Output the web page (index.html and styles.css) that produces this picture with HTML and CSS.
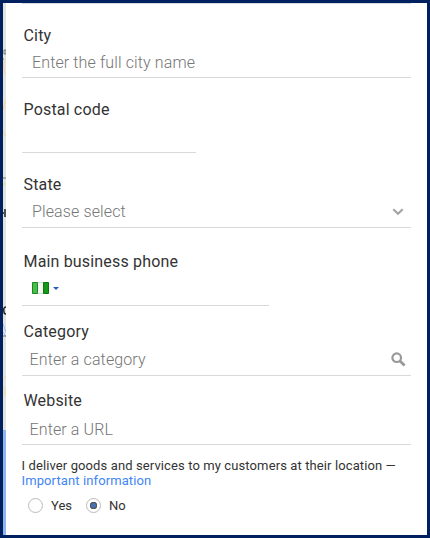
FILE: index.html
```
<!DOCTYPE html>
<html lang="en">
<head>
    <meta charset="UTF-8">
    <title>Business information</title>
    <link rel="stylesheet" href="styles.css">
</head>
<body>
    <div class="window">
        <div class="map">
            <svg width="3" height="532" viewBox="0 0 3 532" fill="none">
                <rect width="3" height="427" fill="#e5e3df"/>
                <rect y="427" width="3" height="105" fill="#8fb5ee"/>
                <path d="M3 56Q-2 61 3 72M0 107L3 96M0 128l3 6M0 181h3M3 373l-3 3M0 384q4 4 1 9" stroke="#f0d58b"/>
                <path d="M0 321l3 8M0 329l3 5" stroke="#9abdf5"/>
                <path d="M1 47h2v4h-2zM0 56h1M0 175h3M0 333h3" stroke="#777"/>
                <path d="M2 206v8M0 210h1M3 304q-3 0-2 5 0 2 2 2" stroke="#222" stroke-width="1.500"/>
            </svg>
        </div>
        <form class="form">
            <div class="field city">
                <label for="city">City</label>
                <div class="control"><input type="text" id="city" placeholder="Enter the full city name"></div>
            </div>
            <div class="field postal">
                <label for="postal">Postal code</label>
                <div class="control"><input type="text" id="postal"></div>
            </div>
            <div class="field state">
                <label>State</label>
                <div class="control">
                    <span class="placeholder">Please select</span>
                    <svg class="chevron" width="12" height="8" viewBox="0 0 12 8" fill="none" stroke="#a5a5a5" stroke-width="2.2">
                        <path d="M1.3 1.3L6 5.8l4.7-4.5"/>
                    </svg>
                </div>
            </div>
            <div class="field phone">
                <label for="phone">Main business phone</label>
                <div class="control">
                    <svg class="flag" width="17" height="12" viewBox="0 0 17 12">
                        <rect x=".5" y=".5" width="16" height="11" fill="#f6f6f6" stroke="#d4d8d4"/>
                        <path d="M.5.5h5v11h-5z" fill="#4dbb4d" stroke="#168a1a"/>
                        <path d="M11.500.5h5v11h-5z" fill="#149a18" stroke="#087b0c"/>
                    </svg>
                    <span class="caret"></span>
                    <input type="text" id="phone">
                </div>
            </div>
            <div class="field category">
                <label for="category">Category</label>
                <div class="control">
                    <input type="text" id="category" placeholder="Enter a category">
                    <svg class="search" width="15" height="15" viewBox="0 0 15 15" fill="none" stroke="#999">
                        <circle cx="5.700" cy="5.700" r="4.300" stroke-width="2.200"/>
                        <path d="M9 9l4.600 4.600" stroke-width="2.800"/>
                    </svg>
                </div>
            </div>
            <div class="field website">
                <label for="website">Website</label>
                <div class="control"><input type="text" id="website" placeholder="Enter a URL"></div>
            </div>
            <p class="delivery">I deliver goods and services to my customers at their location —<br><a href="#">Important information</a></p>
            <div class="options">
                <label><input type="radio" name="deliver">Yes</label>
                <label><input type="radio" name="deliver" checked>No</label>
            </div>
        </form>
    </div>
</body>
</html>
```

FILE: styles.css
```
* {
    box-sizing: border-box;
}

body {
    margin: 0;
    font-family: Roboto, Arial, sans-serif;
    color: #333;
    background: #fff;
}

.window {
    display: flex;
    height: 538px;
    border: 3px solid #002060;
    overflow: hidden;
}

.map {
    width: 3px;
}

.map svg {
    display: block;
}

.form {
    width: 389.5px;
    margin-left: 15.5px;
    border-top: 1px solid #d9d9d9;
}

.field {
    display: flex;
    flex-direction: column;
    justify-content: flex-end;
    border-bottom: 1px solid #d9d9d9;
}

.field > label {
    padding-left: 2px;
    font-size: 16px;
    line-height: 20px;
    letter-spacing: 0.17px;
}

.control {
    display: flex;
    align-items: center;
    height: 32px;
    padding: 0 7px 0 10.5px;
}

.control input {
    flex: 1;
    min-width: 0;
    padding: 0;
    border: 0;
    outline: 0;
    background: none;
    font: 300 16px Roboto, Arial, sans-serif;
    letter-spacing: 0.12px;
}

.control input::placeholder,
.placeholder {
    color: #757575;
    font-size: 16px;
    font-weight: 300;
    letter-spacing: 0.12px;
    opacity: 1;
}

.city {
    height: 74px;
}

.city .control {
    height: 31px;
    padding-top: 1px;
}

.postal {
    width: 174px;
    height: 75px;
}

.state {
    height: 75px;
}

.state .control {
    padding-top: 1px;
}

.placeholder {
    flex: 1;
}

.phone {
    width: 247px;
    height: 78px;
}

.phone .control {
    height: 33px;
    padding-bottom: 1px;
}

.caret {
    margin: 0 8px 0 4px;
    border: 3px solid transparent;
    border-top-color: #2a5bb5;
    border-bottom: 0;
}

.category {
    height: 70px;
}

.category .control,
.website .control {
    height: 33px;
    padding: 2px 5px 0 8px;
}

.website {
    height: 69px;
}

.website .control {
    padding-top: 4px;
}

.delivery {
    margin: 13px 0 0;
    font-size: 13px;
    line-height: 15px;
    letter-spacing: 0.11px;
    white-space: nowrap;
}

.delivery a {
    color: #4285f4;
    text-decoration: none;
}

.options {
    display: flex;
    gap: 14px;
    margin: 9px 0 0 6.5px;
    font-size: 13px;
}

.options label {
    display: flex;
    align-items: center;
    height: 16px;
}

.options input {
    width: 15px;
    height: 15px;
    margin: 0 8px 0 0;
    appearance: none;
    border: 1px solid #bbb;
    border-radius: 50%;
    background: #fff;
}

.options input:checked {
    background: radial-gradient(circle, #4471b8 0 2px, #555 3px 3.500px, #fff 4px);
}
```
